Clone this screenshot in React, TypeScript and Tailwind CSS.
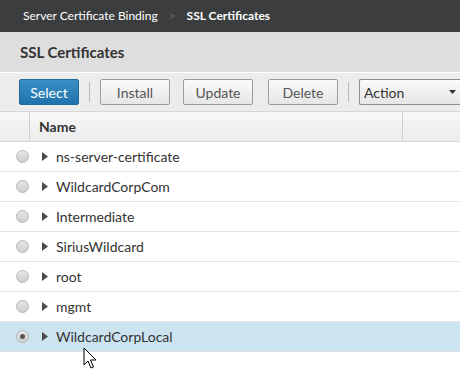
import React from "react";

const rows = [
  "ns-server-certificate",
  "WildcardCorpCom",
  "Intermediate",
  "SiriusWildcard",
  "root",
  "mgmt",
  "WildcardCorpLocal",
];

const font = { fontFamily: 'Lato, "Open Sans", Arial, sans-serif' };

function Radio({ checked }: { checked: boolean }) {
  return (
    <span className="flex h-[13px] w-[13px] items-center justify-center rounded-full border border-[#b5b5b5] bg-gradient-to-b from-[#e6e6e6] to-[#cfcfcf]">
      {checked && <span className="h-[5px] w-[5px] rounded-full bg-[#555]" />}
    </span>
  );
}

function Caret() {
  return (
    <svg width="6" height="9" viewBox="0 0 6 9" className="shrink-0">
      <path d="M0 0 L6 4.5 L0 9 Z" fill="#4a4a4a" />
    </svg>
  );
}

function Btn({ label }: { label: string }) {
  return (
    <button className="flex h-[26px] w-[70px] items-center justify-center rounded-[2px] border border-[#9d9d9d] bg-gradient-to-b from-[#fbfbfb] to-[#e6e6e6] text-[14px] text-[#555]">
      {label}
    </button>
  );
}

export default function App() {
  return (
    <div className="relative h-[374px] w-[460px] overflow-hidden bg-white" style={font}>
      {/* Breadcrumb */}
      <div className="flex h-[32px] items-center bg-[#3c3d3f] pl-[23px] text-[12px] text-white">
        <span>Server Certificate Binding</span>
        <span className="mx-[11px] text-[#6a6b6d]">&gt;</span>
        <span className="font-bold">SSL Certificates</span>
      </div>

      {/* Title */}
      <div className="flex h-[40px] items-center bg-[#dedede] pl-[20px] text-[15px] font-bold text-[#333]">
        SSL Certificates
      </div>

      {/* Toolbar */}
      <div className="flex h-[39px] items-center border-t border-white bg-[#ececec] pl-[19px]">
        <button className="flex h-[26px] w-[60px] items-center justify-center rounded-[2px] border border-[#1f6a98] bg-gradient-to-b from-[#3a8fc6] to-[#1f73ac] text-[14px] text-white">
          Select
        </button>
        <span className="mx-[10px] h-[20px] w-px bg-[#b8b8b8]" />
        <Btn label="Install" />
        <span className="w-[13px]" />
        <Btn label="Update" />
        <span className="w-[15px]" />
        <Btn label="Delete" />
        <span className="mx-[10px] h-[20px] w-px bg-[#b8b8b8]" />
        <div className="flex h-[26px] flex-1 items-center justify-between rounded-l-[2px] border border-r-0 border-[#8f8f8f] bg-gradient-to-b from-[#fbfbfb] to-[#e6e6e6] pl-[4px] pr-[4px] text-[14px] text-[#333]">
          <span>Action</span>
          <svg width="7" height="4" viewBox="0 0 7 4">
            <path d="M0 0 L7 0 L3.5 4 Z" fill="#333" />
          </svg>
        </div>
      </div>

      {/* Header */}
      <div className="flex h-[31px] border-y border-[#d6d6d6] bg-gradient-to-b from-[#f7f7f7] to-[#ececec] text-[14px] font-bold text-[#333]">
        <div className="w-[30px] border-r border-[#cfcfcf]" />
        <div className="flex w-[373px] items-center border-r border-[#cfcfcf] pl-[9px]">Name</div>
        <div className="flex-1" />
      </div>

      {/* Rows */}
      <div>
        {rows.map((r, i) => {
          const sel = i === rows.length - 1;
          return (
            <div
              key={r}
              className={`flex h-[30px] items-center border-b border-[#e3e3e3] text-[14px] text-[#333] ${sel ? "bg-[#cce3f0]" : "bg-white"}`}
            >
              <span className="ml-[16px] mr-[13px]">
                <Radio checked={sel} />
              </span>
              <Caret />
              <span className="ml-[8px]">{r}</span>
            </div>
          );
        })}
      </div>

      {/* Cursor */}
      <svg
        className="absolute left-[83px] top-[347px]"
        width="14"
        height="24"
        viewBox="0 0 14 24"
      >
        <path
          d="M1 1 L1 18 L5 14 L8 21 L10.5 20 L7.5 13 L13 13 Z"
          fill="white"
          stroke="black"
          strokeWidth="1"
          strokeLinejoin="miter"
        />
      </svg>
    </div>
  );
}
